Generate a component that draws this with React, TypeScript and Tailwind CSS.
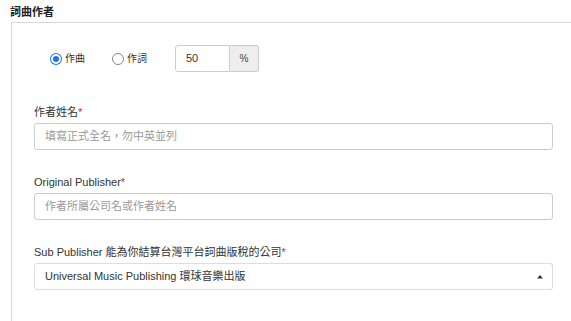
import React from "react";

const font = "font-['Helvetica_Neue','Liberation_Sans','Noto_Sans_CJK_TC',sans-serif]";

const Label = ({ text }: { text: string }) => (
  <div className="h-[14px] leading-[14px] text-[11px] text-[#333] mb-[4px]">
    {text}
    <span className="text-[#e02020]">*</span>
  </div>
);

const Radio = ({ checked, label }: { checked?: boolean; label: string }) => (
  <label className="flex items-center gap-[3px]">
    {checked ? (
      <span className="w-[12px] h-[12px] rounded-full bg-[#1a73f0] flex items-center justify-center">
        <span className="w-[10px] h-[10px] rounded-full bg-white flex items-center justify-center">
          <span className="w-[6px] h-[6px] rounded-full bg-[#1a73f0]" />
        </span>
      </span>
    ) : (
      <span className="w-[12px] h-[12px] rounded-full border border-[#888] bg-white" />
    )}
    <span className="text-[10px] text-[#333]">{label}</span>
  </label>
);

export default function App() {
  return (
    <div className={`w-[571px] h-[321px] bg-white overflow-hidden ${font}`}>
      <div className="h-[22px] pl-[10px] pt-[6px] text-[11px] leading-[13px] font-bold text-[#222]">
        詞曲作者
      </div>
      <div className="ml-[11px] h-[299px] border-l border-t border-[#d8d8d8] pl-[22px] pr-[18px]">
        <div className="flex items-center pt-[22px] pl-[16px]">
          <Radio checked label="作曲" />
          <div className="w-[27px]" />
          <Radio label="作詞" />
          <div className="ml-[28px] flex h-[27px]">
            <div className="w-[55px] border border-[#ccc] rounded-l-[3px] flex items-center pl-[10px] text-[11px] text-[#333]">
              50
            </div>
            <div className="w-[29px] border border-l-0 border-[#ccc] rounded-r-[3px] bg-[#eee] flex items-center justify-center text-[10px] text-[#444]">
              %
            </div>
          </div>
        </div>

        <div className="mt-[33px]">
          <Label text="作者姓名" />
          <div className="h-[27px] border border-[#ccc] rounded-[3px] flex items-center pl-[10px] text-[11px] text-[#999]">
            填寫正式全名，勿中英並列
          </div>
        </div>

        <div className="mt-[25px]">
          <Label text="Original Publisher" />
          <div className="h-[27px] border border-[#ccc] rounded-[3px] flex items-center pl-[10px] text-[11px] text-[#999]">
            作者所屬公司名或作者姓名
          </div>
        </div>

        <div className="mt-[25px]">
          <Label text="Sub Publisher 能為你結算台灣平台詞曲版稅的公司" />
          <div className="h-[27px] border border-[#ddd] rounded-[3px] flex items-center pl-[10px] pr-[8px] text-[11px] text-[#333]">
            <span className="flex-1">Universal Music Publishing 環球音樂出版</span>
            <svg width="8" height="5" viewBox="0 0 8 5">
              <path d="M1 4.5 L4 1 L7 4.5 Z" fill="#333" />
            </svg>
          </div>
        </div>
      </div>
    </div>
  );
}
